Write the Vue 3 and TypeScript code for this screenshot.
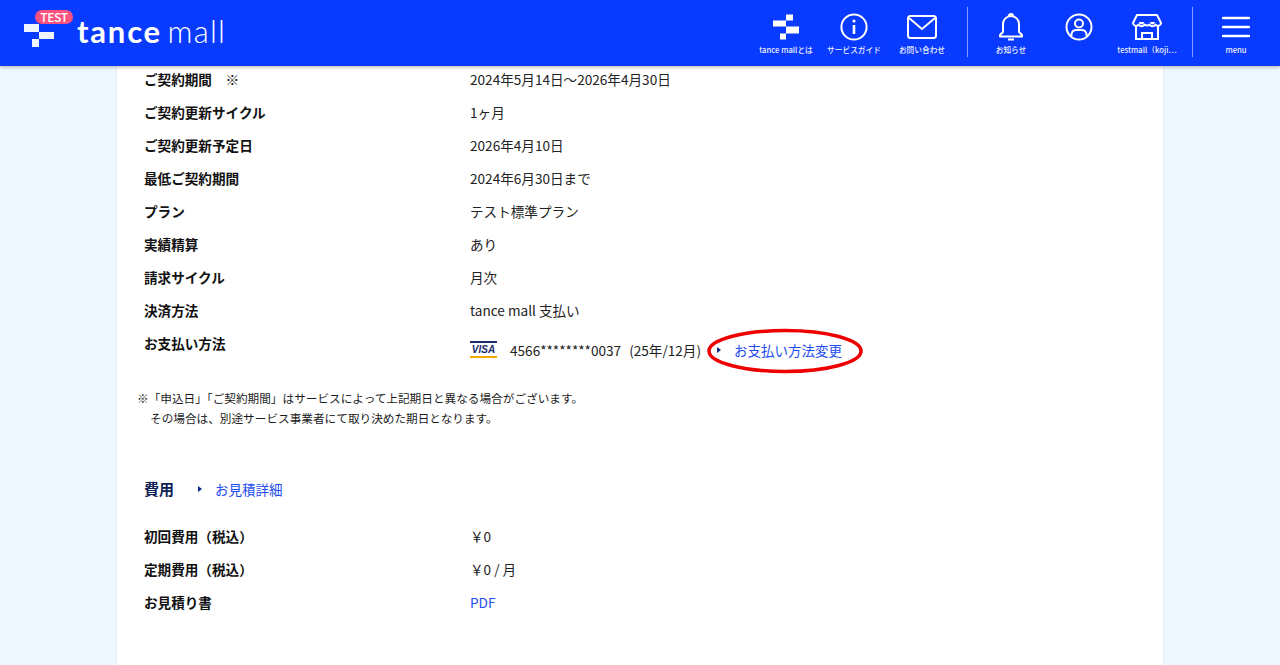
<script setup lang="ts">
const contractRows = [
  { label: 'ご契約期間　※', value: '2024年5月14日～2026年4月30日' },
  { label: 'ご契約更新サイクル', value: '1ヶ月' },
  { label: 'ご契約更新予定日', value: '2026年4月10日' },
  { label: '最低ご契約期間', value: '2024年6月30日まで' },
  { label: 'プラン', value: 'テスト標準プラン' },
  { label: '実績精算', value: 'あり' },
  { label: '請求サイクル', value: '月次' },
  { label: '決済方法', value: 'tance mall 支払い' },
];
</script>

<template>
  <div class="page">
    <header class="header">
      <div class="logo">
        <svg class="logo-mark" width="32" height="24" viewBox="0 0 32 24">
          <path d="M0 0h15v8H0zM15 8h15v7H15zM8 15h7v8H8z" fill="#eef5ff" />
        </svg>
        <span class="test-badge">TEST</span>
        <span class="logo-text"><b>tance</b> mall</span>
      </div>
      <nav class="nav">
        <a class="nav-item">
          <svg width="26" height="25" viewBox="0 0 26 25"><path d="M13 0h7v6h-7zM0 6h13v6H0zM13 12h13v7H13zM7 19h6v6H7z" fill="#fff" /></svg>
          <span>tance mallとは</span>
        </a>
        <a class="nav-item">
          <svg width="28" height="28" viewBox="0 0 28 28" fill="none" stroke="#fff" stroke-width="2"><circle cx="14" cy="14" r="12.600" /><path d="M14 12v9" stroke-width="2.600" /><circle cx="14" cy="8" r="1.600" fill="#fff" stroke="none" /></svg>
          <span>サービスガイド</span>
        </a>
        <a class="nav-item">
          <svg width="30" height="24" viewBox="0 0 30 24" fill="none" stroke="#fff" stroke-width="2"><rect x="1" y="1" width="28" height="22" rx="2.500" /><path d="M2 3l13 11L28 3" /></svg>
          <span>お問い合わせ</span>
        </a>
        <i class="nav-sep"></i>
        <a class="nav-item">
          <svg width="26" height="28" viewBox="0 0 26 28" fill="none" stroke="#fff" stroke-width="2"><path d="M5 19v-8a8 8 0 0 1 16 0v8l3 3v1.500H2V22z" stroke-linejoin="round" /><path d="M10 26.500h6M11 3a2 2 0 0 1 4 0" /></svg>
          <span>お知らせ</span>
        </a>
        <a class="nav-item">
          <svg width="28" height="28" viewBox="0 0 28 28" fill="none" stroke="#fff" stroke-width="2"><circle cx="14" cy="14" r="12.500" /><circle cx="14" cy="10.500" r="4" /><path d="M6.500 23v-2a5 5 0 0 1 5-4h5a5 5 0 0 1 5 4v2" /></svg>
          <span>&nbsp;</span>
        </a>
        <a class="nav-item">
          <svg width="30" height="28" viewBox="0 0 30 28" fill="none" stroke="#fff" stroke-width="2">
            <path d="M5 2h20l4 8a3 3 0 0 1-5.500 1.500 3.500 3.500 0 0 1-6 0 3.500 3.500 0 0 1-5 0 3.500 3.500 0 0 1-6 0A3 3 0 0 1 1 10z" stroke-linejoin="round" />
            <path d="M7 9a2.500 2.500 0 0 0 5 0zM18 9a2.500 2.500 0 0 0 5 0z" fill="#fff" stroke="none" />
            <path d="M4 13v13h22V13M10 26v-6h10v6" />
          </svg>
          <span>testmall（koji…</span>
        </a>
        <i class="nav-sep"></i>
        <a class="nav-item">
          <svg width="28" height="22" viewBox="0 0 28 22" fill="none" stroke="#fff" stroke-width="2.400" stroke-linecap="round"><path d="M1 2h26M1 11h26M1 20h26" /></svg>
          <span>menu</span>
        </a>
      </nav>
    </header>

    <main class="card">
      <dl class="rows">
        <div v-for="row in contractRows" :key="row.label" class="row">
          <dt>{{ row.label }}</dt>
          <dd>{{ row.value }}</dd>
        </div>
        <div class="row pay-row">
          <dt>お支払い方法</dt>
          <dd class="pay">
            <span class="visa"><em>VISA</em></span>
            <span class="card-no">4566********0037</span>
            <span class="card-exp">(25年/12月)</span>
            <span class="pay-link">
              <a class="link"><i class="arrow"></i>お支払い方法変更</a>
              <svg class="circle" width="156" height="46" viewBox="0 0 156 46"><ellipse cx="78" cy="23" rx="76" ry="20.500" fill="none" stroke="#ee0000" stroke-width="3.500" /></svg>
            </span>
          </dd>
        </div>
      </dl>

      <p class="note">※「申込日」「ご契約期間」はサービスによって上記期日と異なる場合がございます。<br><span class="indent">その場合は、別途サービス事業者にて取り決めた期日となります。</span></p>

      <div class="fee-head">
        <h3>費用</h3>
        <a class="link"><i class="arrow"></i>お見積詳細</a>
      </div>

      <dl class="rows">
        <div class="row"><dt>初回費用（税込）</dt><dd>￥0</dd></div>
        <div class="row"><dt>定期費用（税込）</dt><dd>￥0 / 月</dd></div>
        <div class="row"><dt>お見積り書</dt><dd><a class="pdf">PDF</a></dd></div>
      </dl>
    </main>
  </div>
</template>

<style>
html, body { margin: 0; height: 100%; overflow: hidden; }
</style>

<style scoped>
.page {
  height: 665px;
  overflow: hidden;
  background: #eff8ff;
  font-family: "Noto Sans CJK JP", "Noto Sans", sans-serif;
  color: #1a1a1a;
}
.header {
  height: 66px;
  background: #083aff;
  display: flex;
  align-items: flex-start;
  justify-content: space-between;
  box-shadow: 0 1px 4px rgba(0, 0, 0, .3);
  position: relative;
  z-index: 2;
}
.logo {
  position: relative;
  display: flex;
  align-items: flex-start;
  margin: 14px 0 0 24px;
  gap: 21px;
  color: #fff;
}
.logo-mark { margin-top: 10px; }
.test-badge {
  position: absolute;
  left: 11px;
  top: -4px;
  width: 38px;
  height: 14px;
  line-height: 14px;
  border-radius: 7px;
  background: #f9527f;
  font-size: 12px;
  font-weight: 500;
  text-align: center;
  letter-spacing: -.3px;
}
.logo-text {
  font-family: Lato, "Noto Sans", sans-serif;
  font-size: 31px;
  line-height: 34px;
  letter-spacing: 1.200px;
  word-spacing: -4px;
  font-weight: 300;
}
.logo-text b { font-weight: 700; letter-spacing: 1.800px; }
.nav { display: flex; align-items: flex-start; padding-right: 10px; }
.nav-item {
  width: 68px;
  height: 58px;
  color: #fff;
  display: flex;
  flex-direction: column;
  align-items: center;
  font-size: 7.700px;
  font-weight: 500;
  white-space: nowrap;
}
.nav-item svg { margin-top: 13px; height: 28px; }
.nav-item span { margin-top: 3px; line-height: 12px; opacity: .92; }
.nav-sep {
  width: 1px;
  height: 50px;
  margin: 7px 9px 0 11px;
  background: rgba(255, 255, 255, .5);
}
.card {
  width: 1048px;
  height: 620px;
  margin: 0 auto;
  box-sizing: border-box;
  padding: 0 0 0 27px;
  background: #fff;
  border: 1px solid #e4edf5;
  border-width: 0 1px;
}
.rows { margin: 0; }
.row {
  display: flex;
  height: 33px;
  line-height: 27px;
  font-size: 13.600px;
}
dt { width: 326px; font-weight: 700; color: #111; }
dd { margin: 0; font-weight: 400; color: #222; }
.pay-row { height: 53px; }
.pay { display: flex; align-items: center; height: 40px; }
.visa {
  width: 27px;
  height: 17px;
  box-sizing: border-box;
  border-top: 2px solid #1a2a6c;
  border-bottom: 2px solid #f2a900;
  display: flex;
  align-items: center;
  justify-content: center;
  margin-right: 13px;
  margin-bottom: 2px;
}
.visa em { font: italic 700 10px "Liberation Sans", sans-serif; color: #1a2a6c; }
.card-exp { margin-left: 8px; }
.pay-link { position: relative; display: inline-flex; margin-left: 14px; }
.circle { position: absolute; left: -8px; top: -9px; }
.link { color: #1d4cf0; font-size: 13.500px; display: inline-flex; align-items: center; white-space: nowrap; }
.arrow {
  width: 0; height: 0;
  border-left: 4px solid #0d2a8c;
  border-top: 3.500px solid transparent;
  border-bottom: 3.500px solid transparent;
  margin: 0 13px 0 2px;
}
.pdf { color: #1d4cf0; }
.note {
  margin: 0 0 0 -7px;
  padding-top: 5px;
  font-size: 11.650px;
  line-height: 20px;
}
.indent { padding-left: 13px; }
.fee-head { display: flex; align-items: center; margin-top: 47px; height: 27px; margin-bottom: 21px; }
.fee-head h3 { margin: 0 22px 0 0; font-size: 15px; font-weight: 700; color: #0f1f57; }
</style>
